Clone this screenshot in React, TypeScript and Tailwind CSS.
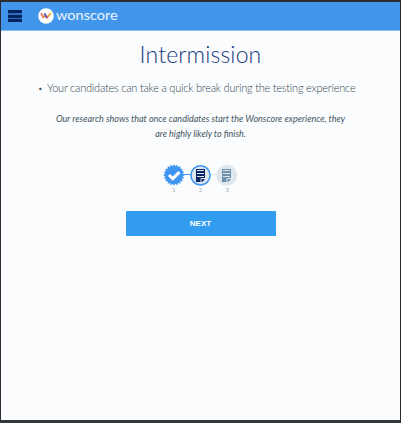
import React from "react";

function Logo() {
  return (
    <div className="flex items-center">
      <svg className="block" width="16" height="16" viewBox="0 0 16 16">
        <circle cx="8" cy="8" r="7.8" fill="#fff" />
        <path d="M3 5.2 5.6 10" stroke="#ef6a5b" strokeWidth="1.7" fill="none" />
        <path d="M5.6 10 7.8 6.2" stroke="#f3a14b" strokeWidth="1.5" fill="none" />
        <path d="M6.4 5.4 9 10" stroke="#5547a8" strokeWidth="1.8" fill="none" />
        <path d="M9 10.4 11 6.6" stroke="#ef6a5b" strokeWidth="1.5" fill="none" />
        <path d="M10.4 8.4 13 4.8" stroke="#f5b23f" strokeWidth="1.7" fill="none" />
      </svg>
      <span className="ml-[2px] -mt-[2px] inline-block origin-left scale-x-[1.12] text-[13px] leading-4 text-white/90">
        wonscore
      </span>
    </div>
  );
}

function Sheet({ x, color, bg }: { x: number; color: string; bg: string }) {
  return (
    <g transform={`translate(${x} 5)`}>
      <path d="M0 0H9V9.5L5.5 13H0Z" fill={color} />
      <path d="M1 1.5H8M1 4.5H8M1 7.5H8" stroke={bg} strokeWidth="1" />
      <path d="M5 13V9.5H9" stroke={bg} strokeWidth="1" fill="none" />
      <path d="M6 13V10.5H9Z" fill={color} />
    </g>
  );
}

function Steps() {
  const points = Array.from({ length: 40 }, (_, i) => {
    const r = i % 2 ? 8.9 : 10.7;
    const a = (i * Math.PI) / 20;
    return `${(11 + r * Math.sin(a)).toFixed(2)},${(11 - r * Math.cos(a)).toFixed(2)}`;
  }).join(" ");
  return (
    <div className="w-[75px]">
      <svg className="block" width="75" height="23" viewBox="0 0 75 23">
        <path d="M20 10.5H28" stroke="#4398ef" strokeWidth="1" />
        <path d="M48 10.5H54" stroke="#dfe5ec" strokeWidth="1" />
        <polygon points={points} fill="#3e96f2" />
        <path d="M6 11 9.8 14.6 16.4 8.2" stroke="#fff" strokeWidth="3" fill="none" />
        <circle cx="37.5" cy="11.3" r="9.6" fill="#e0e6ed" stroke="#3e96f2" strokeWidth="1.6" />
        <circle cx="63.7" cy="11.3" r="10.5" fill="#e0e6ed" />
        <Sheet x={33} color="#082568" bg="#e0e6ed" />
        <Sheet x={59} color="#6f91ad" bg="#e0e6ed" />
      </svg>
      <div className="-mt-px flex justify-between pr-[9px] pl-[9px] text-[6px] leading-[8px] text-[#a9afb5]">
        <span>1</span>
        <span>2</span>
        <span>3</span>
      </div>
    </div>
  );
}

export default function App() {
  return (
    <div className="flex h-[423px] w-[401px] flex-col border-t-2 border-r border-b-[3px] border-l border-[#2a2c2f] border-b-[#34383b] bg-[#fafcfe] font-['Lato',sans-serif]">
      <header className="flex h-[29px] shrink-0 items-center border-b border-[#8cbff2] bg-[#4196ec] pl-[7px]">
        <div className="mr-4 flex h-3 w-[14px] flex-col justify-between bg-[#2a6fc0]">
          <i className="block h-[3px] bg-[#05235f]" />
          <i className="block h-[3px] bg-[#05235f]" />
          <i className="block h-[3px] bg-[#05235f]" />
        </div>
        <Logo />
      </header>
      <main className="flex flex-col items-center">
        <h1 className="mt-[7px] text-[23px] leading-[32px] font-light tracking-[0.15px] whitespace-nowrap text-[#173a7c]">
          Intermission
        </h1>
        <ul className="mt-[10px] flex w-full pl-[37px] text-[11px] leading-4 font-light tracking-[-0.22px] whitespace-nowrap text-[#37474f]">
          <li className="flex">
            <span className="w-[9px] text-[8px]">•</span>
            <span>Your candidates can take a quick break during the testing experience</span>
          </li>
        </ul>
        <p className="mt-[15px] text-center text-[9px] leading-[15px] whitespace-nowrap text-[#445560] italic">
          Our research shows that once candidates start the Wonscore experience, they
          <br />
          are highly likely to finish.
        </p>
        <div className="mt-[23px]">
          <Steps />
        </div>
        <button className="mt-[17px] h-[25px] w-[150px] rounded-[1px] bg-[#329cee] font-['Liberation_Sans',Arial,sans-serif] text-[8px] font-bold text-white">
          NEXT
        </button>
      </main>
    </div>
  );
}
